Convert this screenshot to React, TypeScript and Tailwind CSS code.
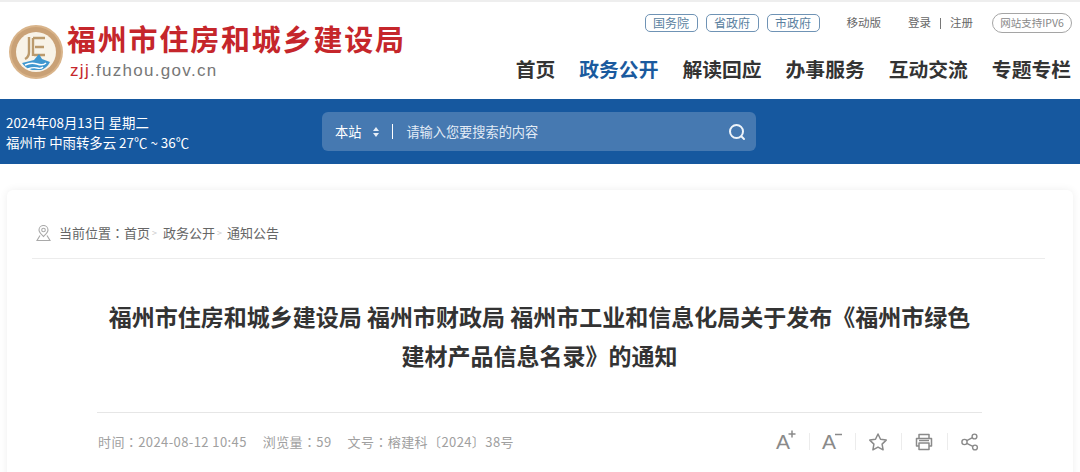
const cjk = { fontFamily: '"Noto Sans CJK SC", "Noto Sans", sans-serif' };

function TopLink({ children }: { children: string }) {
  return (
    <a className="flex h-[18px] w-[53px] items-center justify-center rounded-[5px] border border-[#6f93b5] text-[12px] leading-none text-[#5b7f9f]">
      {children}
    </a>
  );
}

function Colon() {
  return <span className="font-['Noto_Sans_CJK_TC']">：</span>;
}

function Logo() {
  return (
    <svg width="56" height="56" viewBox="0 0 56 56" className="shrink-0">
      <circle cx="28" cy="28" r="27" fill="#d9b48a" />
      <circle cx="28" cy="28" r="25" fill="#c9a176" />
      <circle cx="28" cy="28" r="20" fill="#f8f3e8" />
      <path d="M21 13v15q0 5-4 7M25 14v18M25 14h12M27 23h9M26 31h11" fill="none" stroke="#bb9a6c" strokeWidth="2.4" />
      <path d="M14 39l12-3 5-6 3 5 8 3q-3 6-9 8h-9q-7-2-10-7z" fill="#3f97cf" />
      <path d="M17 41q6-3 12-1t9-1M20 45q5-2 9-1t6-1" fill="none" stroke="#fff" strokeWidth="1.4" />
    </svg>
  );
}

function Divider() {
  return <span className="h-[17px] w-px bg-[#ececec]" />;
}

function Tools() {
  const c = "#8a8a8a";
  return (
    <div className="flex items-center gap-[12.5px] pr-[2px] text-[#8a8a8a]">
      <span className="relative flex w-[20px] items-center text-[21px] leading-none" style={{ fontFamily: '"Liberation Sans", sans-serif' }}>
        A
        <svg width="8" height="8" viewBox="0 0 8 8" stroke={c} strokeWidth="1.5" className="absolute left-[12px] top-[-1px]">
          <path d="M4 .5v7M.5 4h7" />
        </svg>
      </span>
      <Divider />
      <span className="relative flex w-[20px] items-center text-[21px] leading-none" style={{ fontFamily: '"Liberation Sans", sans-serif' }}>
        A
        <svg width="7" height="3" viewBox="0 0 7 3" stroke={c} strokeWidth="1.5" className="absolute left-[13px] top-[2px]">
          <path d="M0 1.500h7" />
        </svg>
      </span>
      <Divider />
      <svg width="20" height="20" viewBox="0 0 20 20" fill="none" stroke={c} strokeWidth="1.5" strokeLinejoin="round">
        <path d="M10 2l2.500 5.300 5.700.8-4.100 4 1 5.700-5.100-2.700-5.100 2.700 1-5.700-4.100-4 5.700-.8z" />
      </svg>
      <Divider />
      <svg width="20" height="20" viewBox="0 0 20 20" fill="none" stroke={c} strokeWidth="1.5" strokeLinejoin="round">
        <path d="M5 6V2.500h10V6M5 14H2.500V6.500h15V14H15" />
        <path d="M5 11h10v6.500H5zM5 8.500h10" />
      </svg>
      <Divider />
      <svg width="20" height="20" viewBox="0 0 20 20" fill="none" stroke={c} strokeWidth="1.4">
        <circle cx="4.500" cy="10" r="2.600" />
        <circle cx="14.500" cy="4.500" r="2.400" />
        <circle cx="15" cy="15.500" r="2.400" />
        <path d="M6.800 8.700l5.600-3M6.800 11.300l6 3" />
      </svg>
    </div>
  );
}

export default function App() {
  return (
    <div className="h-[472px] w-[1080px] overflow-hidden bg-white" style={cjk}>
      <header className="flex h-[99px] justify-between border-t-2 border-[#eeeeee] pl-[8px] pr-[8px]">
        <div className="flex items-center gap-[3px] pt-[2px]">
          <Logo />
          <div className="flex flex-col">
            <div className="-mt-[1px] text-[29px] font-bold leading-[34px] tracking-[1.8px] text-[#c5262b]">福州市住房和城乡建设局</div>
            <div className="mt-[6px] pl-[3px] text-[17px] leading-[20px] tracking-[1.300px] text-[#777777]" style={{ fontFamily: '"Liberation Sans", sans-serif' }}>
              <span className="text-[#c5262b]">zjj</span>.fuzhou.gov.cn
            </div>
          </div>
        </div>
        <div className="flex flex-col items-end">
          <div className="mt-[11px] flex h-[20px] items-center text-[11.500px] text-[#666666]">
            <div className="flex gap-[8px]">
              <TopLink>国务院</TopLink>
              <TopLink>省政府</TopLink>
              <TopLink>市政府</TopLink>
            </div>
            <span className="ml-[27px]">移动版</span>
            <span className="ml-[27px]">登录</span>
            <span className="mx-[9px] h-[11px] w-px bg-[#777777]" />
            <span>注册</span>
            <span className="ml-[19px] flex h-[20px] w-[80px] items-center justify-center rounded-full border border-[#a5a5a5] text-[10.500px] text-[#888888]">网站支持IPV6</span>
          </div>
          <nav className="mr-[1px] mt-[21px] flex gap-[24px] text-[19.800px] font-bold leading-[30px] text-[#333333]">
            <a>首页</a>
            <a className="text-[#1a5a9e]">政务公开</a>
            <a>解读回应</a>
            <a>办事服务</a>
            <a>互动交流</a>
            <a>专题专栏</a>
          </nav>
        </div>
      </header>

      <section className="flex h-[65px] items-center bg-[#16589f] pl-[6px] text-white">
        <div className="w-[316px] text-[13.400px] leading-[20px]">
          <div>2024年08月13日 星期二</div>
          <div>福州市 中雨转多云 27℃ ~ 36℃</div>
        </div>
        <div className="flex h-[39px] w-[434px] items-center rounded-[6px] bg-[#4679b1] pl-[13px] pr-[10px] text-[13.200px]">
          <span>本站</span>
          <svg width="8" height="12" viewBox="0 0 8 12" fill="#e6eef7" className="ml-[11px]">
            <path d="M4 1l3 4H1zM4 11L1 7h6z" />
          </svg>
          <span className="ml-[12px] h-[15px] w-px bg-white" />
          <span className="ml-[13px] text-[#e3ecf6]">请输入您要搜索的内容</span>
          <svg width="18" height="18" viewBox="0 0 18 18" fill="none" stroke="#eef4fa" strokeWidth="2" strokeLinecap="round" className="ml-auto">
            <circle cx="8.500" cy="8.500" r="6.500" />
            <path d="M13.500 13.500l2.500 2.500" />
          </svg>
        </div>
      </section>

      <main className="mx-[7px] mt-[26px] h-[300px] rounded-t-[6px] bg-white shadow-[0_0_8px_rgba(0,0,0,0.07)]">
        <div className="ml-[25px] mr-[28px] flex h-[69px] items-center border-b border-[#ececec] pt-[18px] text-[13px] text-[#666666]">
          <svg width="15" height="17" viewBox="0 0 15 17" fill="none" stroke="#a9a9a9" strokeWidth="1.100" className="ml-[4px] mr-[7px]">
            <path d="M7.500 11.500C5 9 3 7.300 3 5a4.500 4.500 0 0 1 9 0c0 2.300-2 4-4.500 6.500z" />
            <circle cx="7.500" cy="5" r="1.800" />
            <path d="M4 10.500L1 15.500h13l-3-5" />
          </svg>
          <span className="ml-[1px]">当前位置<Colon />首页</span>
          <span className="mx-[2px] text-[9px] text-[#cccccc]">&gt;</span>
          <span className="ml-[4px]">政务公开</span>
          <span className="mx-[2px] text-[9px] text-[#cccccc]">&gt;</span>
          <span className="ml-[3px]">通知公告</span>
        </div>
        <div className="mx-[91px]">
          <h1 className="-ml-px border-b border-[#e6e6e6] pb-[37px] pt-[38px] text-center text-[23px] font-bold leading-[39px] text-[#333333]">
            福州市住房和城乡建设局 福州市财政局 福州市工业和信息化局关于发布《福州市绿色<br />建材产品信息名录》的通知
          </h1>
          <div className="flex h-[57px] items-center justify-between text-[13px] tracking-[0.4px] text-[#a0a0a0]">
            <div className="flex gap-[16px]">
              <span>时间<Colon />2024-08-12 10:45</span>
              <span>浏览量<Colon />59</span>
              <span>文号<Colon />榕建科〔2024〕38号</span>
            </div>
            <Tools />
          </div>
        </div>
      </main>
    </div>
  );
}
